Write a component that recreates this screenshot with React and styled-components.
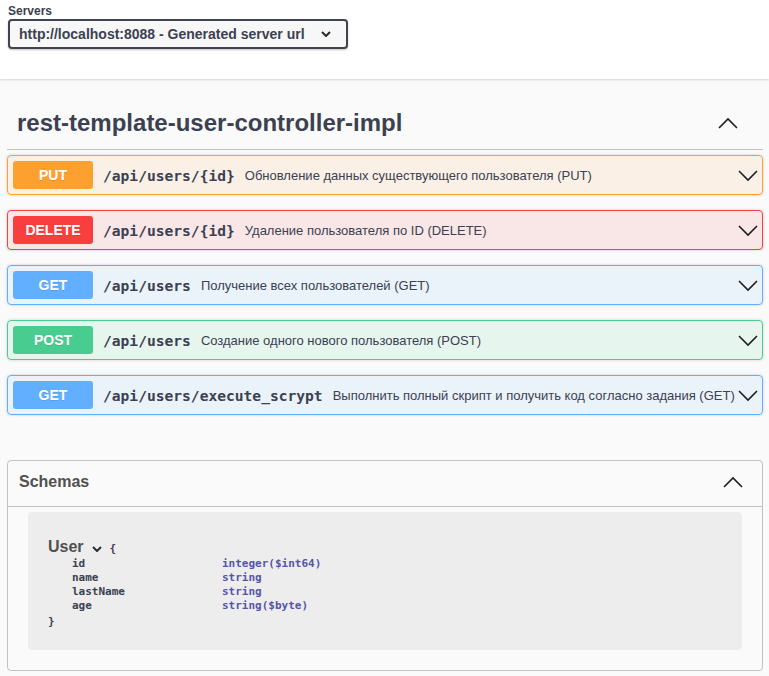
import React from "react"
import styled, { createGlobalStyle } from "styled-components"

const GlobalStyle = createGlobalStyle`
	body {
		margin: 0;
		background: #fafafa;
		font-family: "Liberation Sans", Arial, sans-serif;
		color: #3b4151;
	}
`

const methodColors = {
	PUT: { main: "#fca130", bg: "rgba(252,161,48,.1)" },
	DELETE: { main: "#f93e3e", bg: "rgba(249,62,62,.1)" },
	GET: { main: "#61affe", bg: "rgba(97,175,254,.1)" },
	POST: { main: "#49cc90", bg: "rgba(73,204,144,.1)" },
}

const operations = [
	{ method: "PUT", path: "/api/users/{id}", summary: "Обновление данных существующего пользователя (PUT)" },
	{ method: "DELETE", path: "/api/users/{id}", summary: "Удаление пользователя по ID (DELETE)" },
	{ method: "GET", path: "/api/users", summary: "Получение всех пользователей (GET)" },
	{ method: "POST", path: "/api/users", summary: "Создание одного нового пользователя (POST)" },
	{ method: "GET", path: "/api/users/execute_scrypt", summary: "Выполнить полный скрипт и получить код согласно задания (GET)" },
]

const userProps = [
	{ name: "id", type: "integer($int64)" },
	{ name: "name", type: "string" },
	{ name: "lastName", type: "string" },
	{ name: "age", type: "string($byte)" },
]

const Chevron = ({ up, size = 20 }) => (
	<svg width={size} height={size} viewBox="0 0 20 20" fill="none">
		<polyline
			points={up ? "1,15 10,6 19,15" : "1,6 10,15 19,6"}
			stroke="#1f1f1f"
			strokeWidth="1.6"
		/>
	</svg>
)

const SmallChevron = ({ w, h }) => (
	<svg width={w} height={h} viewBox={`0 0 ${w} ${h}`} fill="none">
		<polyline
			points={`1,1 ${w / 2},${h - 1} ${w - 1},1`}
			stroke="#2b2b2b"
			strokeWidth="2"
		/>
	</svg>
)

const App = () => {
	return (
		<>
			<GlobalStyle />
			<SchemeBar>
				<ServersLabel>Servers</ServersLabel>
				<ServerSelect>
					<span>http://localhost:8088 - Generated server url</span>
					<SmallChevron w={10} h={6} />
				</ServerSelect>
			</SchemeBar>
			<Wrapper>
				<TagTitle>
					<span>rest-template-user-controller-impl</span>
					<Chevron up />
				</TagTitle>
				{operations.map((op, i) =>
					<OpBlock key={i} $method={op.method}>
						<Method $method={op.method}>{op.method}</Method>
						<OpPath>{op.path}</OpPath>
						<OpSummary>{op.summary}</OpSummary>
						<Chevron />
					</OpBlock>)}
				<Models>
					<ModelsHeader>
						<span>Schemas</span>
						<Chevron up />
					</ModelsHeader>
					<ModelsBody>
						<ModelBox>
							<ModelTitle>
								<span>User</span>
								<SmallChevron w={10} h={6} />
								<Brace>{"{"}</Brace>
							</ModelTitle>
							<PropTable>
								{userProps.map(p =>
									<React.Fragment key={p.name}>
										<PropName>{p.name}</PropName>
										<PropType>{p.type}</PropType>
									</React.Fragment>)}
							</PropTable>
							<CloseBrace>{"}"}</CloseBrace>
						</ModelBox>
					</ModelsBody>
				</Models>
			</Wrapper>
		</>
	)
}

const SchemeBar = styled.div`
	background: #fff;
	box-shadow: 0 1px 2px 0 rgba(0,0,0,.15);
	padding: 4px 8px 30px;
`
const ServersLabel = styled.div`
	font-size: 12px;
	line-height: 14px;
	font-weight: bold;
	margin-bottom: 1px;
`
const ServerSelect = styled.div`
	display: inline-flex;
	align-items: center;
	gap: 16px;
	box-sizing: border-box;
	height: 30px;
	padding: 0 15px 0 9px;
	border: 2px solid #41444e;
	border-radius: 4px;
	background: #f7f7f7;
	box-shadow: 0 1px 2px 0 rgba(0,0,0,.25);
	font-size: 14px;
	font-weight: bold;
	color: #3b4151;
`

const Wrapper = styled.div`
	padding: 20px 6px 10px 7px;
`
const TagTitle = styled.h3`
	display: flex;
	align-items: center;
	justify-content: space-between;
	margin: 0 0 5px;
	padding: 9px 25px 11px 10px;
	min-height: 30px;
	border-bottom: 1px solid rgba(59,65,81,.3);
	font-size: 24px;
	font-weight: bold;
	color: #3b4151;
`

const OpBlock = styled.div`
	display: flex;
	align-items: center;
	padding: 5px 4px 5px 5px;
	margin-bottom: 15px;
	border: 1px solid ${p => methodColors[p.$method].main};
	border-radius: 4px;
	background: ${p => methodColors[p.$method].bg};
	box-shadow: 0 0 3px rgba(0,0,0,.19);
	svg { flex-shrink: 0; }
`
const Method = styled.div`
	min-width: 80px;
	padding: 6px 0;
	border-radius: 3px;
	background: ${p => methodColors[p.$method].main};
	color: #fff;
	font-size: 14px;
	font-weight: bold;
	text-align: center;
	text-shadow: 0 1px 0 rgba(0,0,0,.1);
`
const OpPath = styled.span`
	padding: 0 10px;
	font-family: "DejaVu Sans Mono", monospace;
	font-size: 14.6px;
	font-weight: 600;
	color: #3b4151;
	white-space: nowrap;
`
const OpSummary = styled.span`
	flex: 1;
	font-size: 13px;
	color: #3b4151;
	white-space: nowrap;
`

const Models = styled.section`
	margin-top: 45px;
	border: 1px solid rgba(59,65,81,.3);
	border-radius: 4px;
`
const ModelsHeader = styled.h4`
	display: flex;
	align-items: center;
	justify-content: space-between;
	margin: 0;
	min-height: 25px;
	padding: 8px 19px 12px 11px;
	border-bottom: 1px solid rgba(59,65,81,.3);
	font-size: 16px;
	font-weight: bold;
	color: #505050;
`
const ModelsBody = styled.div`
	padding: 5px 20px 20px;
`
const ModelBox = styled.div`
	padding: 26px 20px 21px;
	border-radius: 4px;
	background: rgba(0,0,0,.05);
`
const ModelTitle = styled.div`
	display: flex;
	align-items: baseline;
	gap: 8px;
	font-size: 16px;
	font-weight: 600;
	color: #505050;
`
const Brace = styled.span`
	font-family: "DejaVu Sans Mono", monospace;
	font-size: 11px;
	font-weight: 600;
	color: #3b4151;
`
const PropTable = styled.div`
	display: grid;
	grid-template-columns: 150px 1fr;
	margin-top: 1px;
	padding-left: 24px;
	font-family: "DejaVu Sans Mono", monospace;
	font-size: 11px;
	font-weight: 600;
	line-height: 14px;
`
const PropName = styled.span`
	color: #3b4151;
`
const PropType = styled.span`
	color: #55a;
`
const CloseBrace = styled.div`
	margin-top: 2px;
	font-family: "DejaVu Sans Mono", monospace;
	font-size: 11px;
	font-weight: 600;
	line-height: 14px;
	color: #3b4151;
`

export default App
